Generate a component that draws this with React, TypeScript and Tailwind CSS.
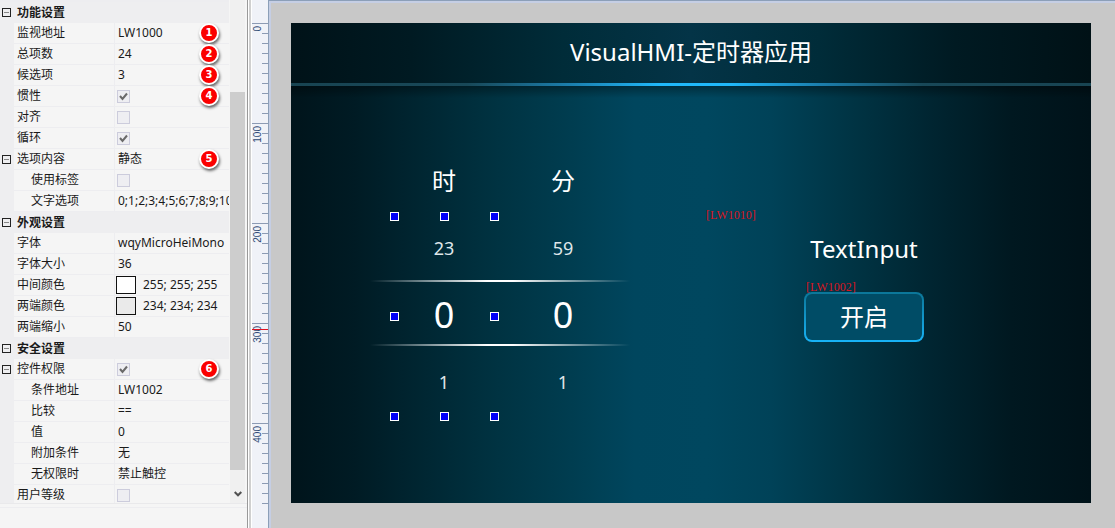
import type { ReactNode } from "react";
import { clsx } from "clsx";

type Row = {
  label: string;
  kind?: "group" | "text" | "check" | "color";
  value?: string;
  checked?: boolean;
  swatch?: string;
  child?: boolean;
  expandable?: boolean;
  badge?: number;
};

const ROWS: Row[] = [
  { label: "功能设置", kind: "group" },
  { label: "监视地址", value: "LW1000", badge: 1 },
  { label: "总项数", value: "24", badge: 2 },
  { label: "候选项", value: "3", badge: 3 },
  { label: "惯性", kind: "check", checked: true, badge: 4 },
  { label: "对齐", kind: "check" },
  { label: "循环", kind: "check", checked: true },
  { label: "选项内容", value: "静态", expandable: true, badge: 5 },
  { label: "使用标签", kind: "check", child: true },
  { label: "文字选项", value: "0;1;2;3;4;5;6;7;8;9;10", child: true },
  { label: "外观设置", kind: "group" },
  { label: "字体", value: "wqyMicroHeiMono" },
  { label: "字体大小", value: "36" },
  { label: "中间颜色", kind: "color", value: "255; 255; 255", swatch: "bg-white" },
  { label: "两端颜色", kind: "color", value: "234; 234; 234", swatch: "bg-[#eaeaea]" },
  { label: "两端缩小", value: "50" },
  { label: "安全设置", kind: "group" },
  { label: "控件权限", kind: "check", checked: true, expandable: true, badge: 6 },
  { label: "条件地址", value: "LW1002", child: true },
  { label: "比较", value: "==", child: true },
  { label: "值", value: "0", child: true },
  { label: "附加条件", value: "无", child: true },
  { label: "无权限时", value: "禁止触控", child: true },
  { label: "用户等级", kind: "check" },
];

const RULER_MARKS = [0, 100, 200, 300, 400];

function Toggle({ label }: { label: string }) {
  return (
    <button
      type="button"
      aria-label={`折叠${label}`}
      className="ml-0.5 flex h-[9px] w-[9px] items-center justify-center border border-[#222]"
    >
      <span className="h-px w-[5px] bg-[#888]" />
    </button>
  );
}

function Badge({ children }: { children: ReactNode }) {
  return (
    <span className="absolute top-0 right-2.5 flex h-5 w-5 items-center justify-center rounded-full border-2 border-white bg-[#fb0000] font-['DejaVu_Sans',sans-serif] text-[10px] leading-none font-bold text-white shadow-[1px_2px_3px_rgba(0,0,0,0.6)]">
      {children}
    </span>
  );
}

function Check({ label, checked }: { label: string; checked?: boolean }) {
  return (
    <span className="mt-px -ml-px grid h-[13px] w-[13px] shrink-0">
      <input
        type="checkbox"
        aria-label={label}
        defaultChecked={checked}
        className="peer col-start-1 row-start-1 appearance-none border border-[#ccccdc] bg-[#eeeef2]"
      />
      <svg
        viewBox="0 0 13 13"
        className="pointer-events-none invisible col-start-1 row-start-1 peer-checked:visible"
        fill="none"
        stroke="#6a6a6a"
        strokeWidth="2"
      >
        <path d="M3 6 L5.5 9 L10 3.5" />
      </svg>
    </span>
  );
}

function PropertyRow({ row }: { row: Row }) {
  if (row.kind === "group") {
    return (
      <tr className="h-[21px] bg-[#eeeef0]">
        <td className="p-0">
          <Toggle label={row.label} />
        </td>
        <th colSpan={2} scope="colgroup" className="p-0 pl-[3px] text-left font-bold">
          {row.label}
        </th>
      </tr>
    );
  }
  return (
    <tr className="h-[21px]">
      <td className="bg-[#eeeef0] p-0">{row.expandable && <Toggle label={row.label} />}</td>
      <th
        scope="row"
        className={clsx(
          "border-r border-b border-[#ededf0] p-0 text-left font-normal",
          row.child ? "pl-[17px]" : "pl-[3px]"
        )}
      >
        {row.label}
      </th>
      <td className="relative border-b border-[#ededf0] p-0">
        <div className="flex h-5 items-center overflow-hidden pl-[3px] whitespace-nowrap">
          {row.kind === "check" && <Check label={row.label} checked={row.checked} />}
          {row.swatch && (
            <span className={clsx("mr-[7px] -ml-0.5 h-[18px] w-5 border border-[#111]", row.swatch)} />
          )}
          {row.value}
        </div>
        {row.badge && <Badge>{row.badge}</Badge>}
      </td>
    </tr>
  );
}

function PropertyPanel() {
  return (
    <aside className="flex w-[248px] shrink-0 flex-col border-r border-[#999] bg-[#f5f5f5] font-['Noto_Sans','Noto_Sans_CJK_SC',sans-serif] text-xs leading-5 text-[#1a1a1a]">
      <div className="flex h-[504px] shrink-0 overflow-hidden border-b border-[#e9e9eb]">
        <div className="w-[229px] overflow-hidden border-t-2 border-[#ededf0]">
          <table className="w-full table-fixed border-separate border-spacing-0">
            <colgroup>
              <col className="w-3.5" />
              <col className="w-[101px]" />
              <col />
            </colgroup>
            <tbody>
              {ROWS.map((row) => (
                <PropertyRow key={row.label} row={row} />
              ))}
            </tbody>
          </table>
        </div>
        <div className="ml-px flex w-[15px] flex-col bg-[#f0f0f0] pt-[92px]">
          <div className="h-[378px] bg-[#cdcdcd]" />
          <button type="button" aria-label="向下滚动" className="mt-auto flex h-[18px] items-center justify-center">
            <svg viewBox="0 0 8 6" className="h-1.5 w-2" fill="none" stroke="#505050" strokeWidth="2">
              <path d="M0.7 1 L4 4.3 L7.3 1" />
            </svg>
          </button>
        </div>
      </div>
      <div className="mt-[3px] flex-1 border-t border-[#ededf0]" />
    </aside>
  );
}

function Ruler() {
  return (
    <div className="relative w-4 shrink-0 bg-[#f0f2f8] pt-[23px]">
      {RULER_MARKS.map((mark) => (
        <div key={mark} className="flex h-[100px] justify-between border-t border-[#8c9bb4]">
          <span className="mt-0.5 ml-px h-fit rotate-180 font-['Liberation_Sans',sans-serif] text-[10px] leading-[10px] text-[#2f4a75] [writing-mode:vertical-rl]">
            {mark}
          </span>
          <span className="mt-[9px] -ml-1 flex w-1.5 shrink-0 flex-col gap-[9px]">
            {Array.from({ length: mark === 400 ? 8 : 9 }, (_, i) => (
              <i key={i} className="h-px bg-[#8c9bb4]" />
            ))}
          </span>
        </div>
      ))}
      {/* cursor position */}
      <div className="absolute top-[329px] left-0 z-10 h-px w-4 bg-[#e01020]" />
    </div>
  );
}

function Picker({ values, className }: { values: [string, string, string]; className: string }) {
  return (
    <div className={clsx("absolute top-[192px] grid h-[200px] w-[100px] grid-rows-3 text-center", className)}>
      <span className="self-center text-lg text-[#dfe6e9]">{values[0]}</span>
      <span className="self-center text-4xl text-white">{values[1]}</span>
      <span className="self-center text-lg text-[#dfe6e9]">{values[2]}</span>
    </div>
  );
}

function Handle({ className }: { className: string }) {
  return <i className={clsx("absolute h-[9px] w-[9px] border border-white bg-[#0000f8]", className)} />;
}

function Screen() {
  return (
    <main className="relative h-[480px] w-[800px] shrink-0 bg-[linear-gradient(90deg,#00141b_0%,#001b24_8%,#002733_17%,#003342_26%,#003d50_35%,#00465e_43%,#00475f_52%,#004258_60%,#003444_70%,#002531_80%,#001820_90%,#001219_100%)] font-['Noto_Sans','Noto_Sans_CJK_SC',sans-serif] text-white">
      <header className="flex h-[60px] items-center justify-center bg-[linear-gradient(90deg,#001218_0%,#001a22_15%,#002c39_34%,#043447_50%,#002c39_66%,#001a22_83%,#001116_100%)] pb-0.5">
        <h1 className="text-2xl">VisualHMI-定时器应用</h1>
      </header>
      <div className="h-[3px] bg-[linear-gradient(90deg,#184452_0%,#184858_22%,#1b7fae_35%,#20b8fa_46%,#20b8fa_55%,#1b7fae_66%,#184858_79%,#184452_100%)]" />
      <div className="h-3 bg-linear-to-b from-black/35 to-transparent" />

      <span className="absolute top-[142px] left-[103px] w-[100px] text-center text-2xl">时</span>
      <span className="absolute top-[142px] left-[222px] w-[100px] text-center text-2xl">分</span>
      <Picker values={["23", "0", "1"]} className="left-[103px]" />
      <Picker values={["59", "0", "1"]} className="left-[222px]" />
      <div className="absolute top-[257px] left-[79px] h-0.5 w-[260px] bg-[linear-gradient(90deg,transparent,#fff_45%,#fff_55%,transparent)]" />
      <div className="absolute top-[321px] left-[79px] h-0.5 w-[260px] bg-[linear-gradient(90deg,transparent,#fff_45%,#fff_55%,transparent)]" />

      <Handle className="top-[189px] left-[99px]" />
      <Handle className="top-[189px] left-[149px]" />
      <Handle className="top-[189px] left-[199px]" />
      <Handle className="top-[289px] left-[99px]" />
      <Handle className="top-[289px] left-[199px]" />
      <Handle className="top-[389px] left-[99px]" />
      <Handle className="top-[389px] left-[149px]" />
      <Handle className="top-[389px] left-[199px]" />

      <input
        type="text"
        aria-label="TextInput"
        defaultValue="TextInput"
        className="absolute top-[205px] left-[503px] h-10 w-[140px] text-center text-2xl"
      />
      <button
        type="button"
        className="absolute top-[269px] left-[513px] h-[50px] w-[120px] rounded-lg bg-linear-to-b from-[#0b7698] to-[#18b4f8] p-0.5 text-2xl"
      >
        <span className="flex h-full items-center justify-center rounded-md bg-[#004c66]">开启</span>
      </button>
      <span className="absolute top-[184px] left-[415px] font-['Liberation_Serif',serif] text-xs text-[#d8141e]">
        [LW1010]
      </span>
      <span className="absolute top-[256px] left-[515px] font-['Liberation_Serif',serif] text-xs text-[#d8141e]">
        [LW1002]
      </span>
    </main>
  );
}

export default function App() {
  return (
    <div className="flex h-screen overflow-hidden bg-white">
      <PropertyPanel />
      <div className="mr-px ml-px w-0.5 shrink-0 bg-[#d0d0d0]" />
      <Ruler />
      <div className="min-w-0 flex-1 border-t border-l border-[#8c9fb8]">
        <div className="h-full overflow-hidden border-t-2 border-l-2 border-[#c5cee4] bg-[#c8c8c8] pt-5 pl-5">
          <Screen />
        </div>
      </div>
    </div>
  );
}
